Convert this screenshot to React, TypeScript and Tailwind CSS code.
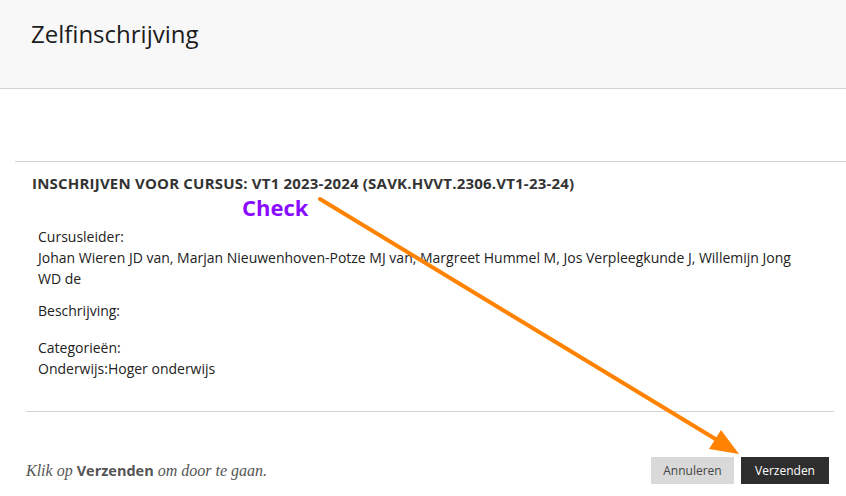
import React from 'react';

const sans = { fontFamily: '"Open Sans", "Noto Sans", sans-serif' };

const Field: React.FC<{ label: string; value?: string; className?: string }> = ({ label, value, className }) => (
  <div className={`text-[14px] leading-[21px] text-[#222] ${className ?? ''}`}>
    <div>{label}</div>
    {value && <div>{value}</div>}
  </div>
);

export default function App() {
  return (
    <div className="relative w-full h-[496px] bg-white overflow-hidden" style={sans}>
      <div className="h-[89px] bg-[#f8f8f8] border-b border-[#d2d2d2] pl-[31px] pt-[18px]">
        <h1 className="text-[24px] leading-[32px] text-[#1d1d1d]">Zelfinschrijving</h1>
      </div>

      <div className="ml-[15px] mt-[72px] border-t border-[#d2d2d2]">
        <h2 className="pl-[17px] pt-[11px] text-[15px] leading-[20px] tracking-[0.2px] font-bold text-[#333] uppercase">
          Inschrijven voor cursus: VT1 2023-2024 (SAVK.HVVT.2306.VT1-23-24)
        </h2>

        <div className="pl-[23px] pr-[46px] mt-[33px]">
          <Field
            label="Cursusleider:"
            value="Johan Wieren JD van, Marjan Nieuwenhoven-Potze MJ van, Margreet Hummel M, Jos Verpleegkunde J, Willemijn Jong WD de"
          />
          <Field label="Beschrijving:" className="mt-[11px]" />
          <Field label="Categorieën:" value="Onderwijs:Hoger onderwijs" className="mt-[16px]" />
        </div>

        <div className="mx-[11px] mr-[12px] mt-[32px] border-t border-[#d2d2d2]" />
      </div>

      <div className="flex items-center justify-between pl-[26px] pr-[17px] mt-[45px]">
        <p className="text-[16px] text-[#555] italic" style={{ fontFamily: '"Liberation Serif", "DejaVu Serif", serif' }}>
          Klik op <span className="font-bold not-italic text-[14.5px]" style={sans}>Verzenden</span> om door te gaan.
        </p>
        <div className="flex gap-[7px]">
          <button className="h-[27px] w-[83px] bg-[#d9d9d9] text-[12px] text-[#444]">Annuleren</button>
          <button className="h-[27px] w-[88px] bg-[#2e2e2e] text-[12px] text-white">Verzenden</button>
        </div>
      </div>

      <div className="absolute left-[242px] top-[196px] text-[22px] leading-[22px] font-bold text-[#8a0cff]">Check</div>

      <svg className="absolute inset-0 pointer-events-none" width="846" height="496" viewBox="0 0 846 496">
        <line x1="320" y1="199" x2="722" y2="443" stroke="#ff8200" strokeWidth="4" strokeLinecap="round" />
        <polygon points="739,454 709,449 721,430" fill="#ff8200" />
      </svg>
    </div>
  );
}
